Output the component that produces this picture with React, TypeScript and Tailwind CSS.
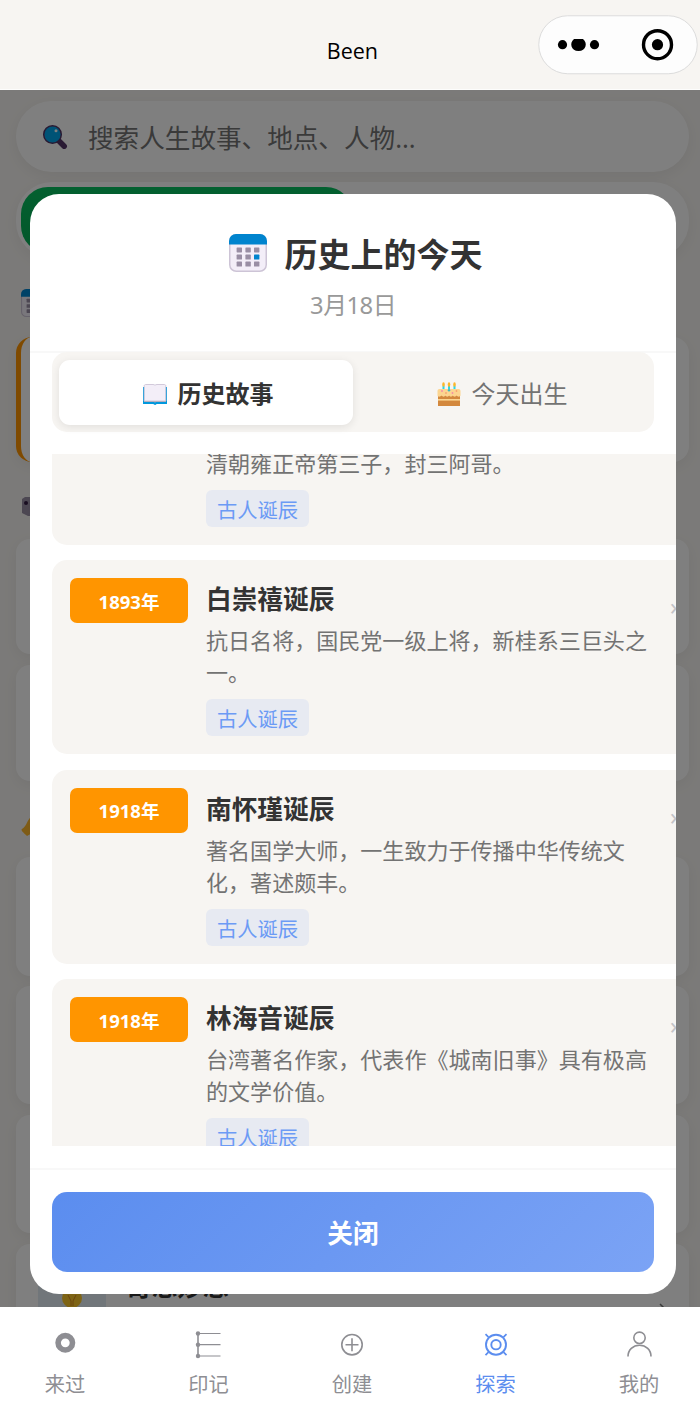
import { useState } from "react";
import type { ReactNode } from "react";
import clsx from "clsx";

interface Story {
  id: string;
  year: string;
  title: string;
  desc: string;
  tag: string;
}

const stories: Story[] = [
  {
    id: "yunzhi",
    year: "1677年",
    title: "胤祉诞辰",
    desc: "清朝雍正帝第三子，封三阿哥。",
    tag: "古人诞辰",
  },
  {
    id: "baichongxi",
    year: "1893年",
    title: "白崇禧诞辰",
    desc: "抗日名将，国民党一级上将，新桂系三巨头之一。",
    tag: "古人诞辰",
  },
  {
    id: "nanhuaijin",
    year: "1918年",
    title: "南怀瑾诞辰",
    desc: "著名国学大师，一生致力于传播中华传统文化，著述颇丰。",
    tag: "古人诞辰",
  },
  {
    id: "linhaiyin",
    year: "1918年",
    title: "林海音诞辰",
    desc: "台湾著名作家，代表作《城南旧事》具有极高的文学价值。",
    tag: "古人诞辰",
  },
];

function CalendarIcon({ className }: { className?: string }) {
  return (
    <svg viewBox="0 0 38 38" className={className}>
      <rect x="0.75" y="0.75" width="36.5" height="36.5" rx="6.5" fill="#f3eef8" stroke="#cdc4d6" strokeWidth="1.5" />
      <path d="M0 10.5V7a7 7 0 0 1 7-7h24a7 7 0 0 1 7 7v3.5z" fill="#0084ce" />
      {[13.4, 20.6, 27.6].map((y, row) =>
        [7.6, 16.4, 25].map((x, col) => (
          <rect
            key={`${row}-${col}`}
            x={x}
            y={y}
            width="5.4"
            height="5"
            rx="0.6"
            fill={row === 1 && col === 2 ? "#0084ce" : "#998ea4"}
          />
        ))
      )}
    </svg>
  );
}

function SearchIcon() {
  return (
    <svg viewBox="0 0 26 26" className="h-[26px] w-[26px]">
      <path d="M17.500 17.500l4.700 4.700" stroke="#533566" strokeWidth="5.500" strokeLinecap="round" />
      <circle cx="10.500" cy="10.500" r="8.800" fill="#00a6ed" stroke="#533566" strokeWidth="1.500" />
      <circle cx="14" cy="6.800" r="1.500" fill="#fff" />
    </svg>
  );
}

function BookIcon() {
  return (
    <svg viewBox="0 0 24 21" className="h-[21px] w-6">
      <path d="M0 3h24v17H13.4c-.2 1.2-2.6 1.2-2.8 0H0z" fill="#0098dd" />
      <path d="M1 17h22v1H13l-1 .8-1-.8H1z" fill="#a79fb0" />
      <path
        d="M1.200 2c0-1 .6-1.500 1.500-1.500H10c.9 0 1.600.3 2 .8.400-.5 1.100-.8 2-.8h7.300c.9 0 1.500.5 1.500 1.500v15H1.200z"
        fill="#f3eef8"
        stroke="#cdc4d6"
        strokeWidth="0.900"
      />
    </svg>
  );
}

function CakeIcon() {
  return (
    <svg viewBox="0 0 24 24" className="h-6 w-6">
      {[6.5, 12, 17.5].map((x) => (
        <g key={x}>
          <rect x={x - 1} y="3.500" width="2" height="5" fill="#26d9e8" />
          <ellipse cx={x} cy="2.500" rx="1.300" ry="2.300" fill="#fcb62b" />
        </g>
      ))}
      <path d="M1 13h22v11H1z" fill="#d3883e" />
      <path d="M1 17h22v1.600H1z" fill="#fcd590" />
      <path
        d="M.5 9c0-1.300.8-2 2-2h19c1.200 0 2 .7 2 2v4.500c-.5 1.500-3 1.500-4 0-.7 1.500-3 1.500-3.700 0-.7 1.500-3 1.500-3.700 0-.7 1.500-3 1.500-3.700 0-.7 1.500-3 1.500-3.700 0C3.500 15 .5 15 .5 13.500z"
        fill="#fcd590"
      />
      <circle cx="12" cy="8.300" r="1.200" fill="#3bb8c4" />
      <circle cx="5" cy="9" r="0.900" fill="#f58aa8" />
      <circle cx="9" cy="11" r="0.900" fill="#f9a36f" />
      <circle cx="15.500" cy="11" r="0.900" fill="#f58aa8" />
      <circle cx="19.500" cy="9" r="0.900" fill="#f9a36f" />
    </svg>
  );
}

function Capsule() {
  return (
    <svg viewBox="0 0 160 60" className="h-[60px] w-40">
      <rect x="0.750" y="0.750" width="158.500" height="58" rx="29" fill="#fdfdfd" stroke="#dcdcdc" />
      <circle cx="24.500" cy="29.700" r="4.600" />
      <path d="M36 24h9c5 4 3 12-4.500 12S31 28 36 24z" />
      <circle cx="56.500" cy="29.700" r="4.600" />
      <circle cx="119.500" cy="29.700" r="14" fill="none" stroke="#000" strokeWidth="3.400" />
      <circle cx="119.500" cy="29.700" r="5.600" />
    </svg>
  );
}

const navItems: { id: string; label: string; icon: ReactNode }[] = [
  {
    id: "been",
    label: "来过",
    icon: <circle cx="14.300" cy="12.800" r="7.200" strokeWidth="5.600" />,
  },
  {
    id: "marks",
    label: "印记",
    icon: (
      <>
        <path d="M2.500 3.500h23M2.500 14.700h23M2.500 26h23" strokeWidth="1.200" />
        <path d="M3 3v23" strokeWidth="1.600" />
        <g fill="currentColor" stroke="none">
          <circle cx="3" cy="3.500" r="2.200" />
          <circle cx="3" cy="14.700" r="2.200" />
          <circle cx="3" cy="26" r="2.200" />
        </g>
      </>
    ),
  },
  {
    id: "create",
    label: "创建",
    icon: (
      <>
        <circle cx="14" cy="14.700" r="10.200" strokeWidth="1.600" />
        <path d="M7.500 14.700h13M14 8.200v13" strokeWidth="1.600" />
      </>
    ),
  },
  {
    id: "explore",
    label: "探索",
    icon: (
      <>
        <circle cx="14" cy="14.700" r="10" strokeWidth="1.900" />
        <circle cx="14" cy="14.700" r="4.700" strokeWidth="1.900" />
        <path d="M3.500 4.200l3 3M24.500 4.200l-3 3M3.500 25.200l3-3M24.500 25.200l-3-3" strokeWidth="1.700" />
      </>
    ),
  },
  {
    id: "mine",
    label: "我的",
    icon: (
      <>
        <circle cx="14.500" cy="7.800" r="5.700" strokeWidth="1.600" />
        <path d="M3 26.500c0-6.500 5-11.300 11.500-11.300S26 20 26 26.500" strokeWidth="1.600" />
      </>
    ),
  },
];

function StoryCard({ story }: { story: Story }) {
  return (
    <div className="flex w-[646px] shrink-0 items-start rounded-[15px] bg-[#f7f5f2] px-[18px] pt-[18px] pb-[18px]">
      <div className="flex h-[45px] w-[118px] shrink-0 items-center justify-center rounded-[7px] bg-[#ff9500] pt-0.5 text-[18.500px] font-bold text-white">
        {story.year}
      </div>
      <div className="ml-[18px] w-[446px] shrink-0">
        <h3 className="h-[42px] text-[25.700px] leading-[44px] font-bold text-[#333]">{story.title}</h3>
        <p className="mt-[4px] text-[22.050px] leading-8 text-[#737373]">{story.desc}</p>
        <span className="mt-[11px] flex h-[37px] w-[103px] items-center justify-center rounded-[6px] bg-[#e7eaf2] pt-[3px] text-[20.300px] leading-[34px] text-[#6c9bf5]">
          {story.tag}
        </span>
      </div>
      <span className="mt-[12px] ml-[18px] text-[24px] leading-8 text-[#c4c4c8]">›</span>
    </div>
  );
}

/* Discover page that sits behind the dialog */
function Backdrop() {
  return (
    <div className="flex h-full flex-col bg-[#f7f5f2] pr-[11px] pl-4">
      <div className="mt-[11px] flex h-[71px] shrink-0 items-center rounded-full bg-white pl-[26px] shadow-[0_4px_15px_rgba(0,0,0,0.06)]">
        <SearchIcon />
        <span className="ml-5 pt-[5px] text-[25.600px] text-[#757575]">搜索人生故事、地点、人物...</span>
      </div>
      <div className="mt-[10px] flex h-[76px] shrink-0 rounded-[36px] bg-white p-[5px] shadow-[0_4px_15px_rgba(0,0,0,0.06)]">
        <div className="w-[332px] rounded-[27px] bg-gradient-to-b from-[#07c160] to-[#06ad56]" />
      </div>
      <div className="mt-[31px] h-7 shrink-0 pl-[5px]">
        <CalendarIcon className="h-7 w-7" />
      </div>
      <div className="mt-5 h-[125px] shrink-0 rounded-[16px] border-l-[5px] border-[#ff9500] bg-white shadow-[0_4px_15px_rgba(0,0,0,0.06)]" />
      <div className="mt-[35px] h-[19px] shrink-0 pl-[6px]">
        <svg viewBox="0 0 28 19" className="h-[19px] w-7">
          <path d="M0 2l3-2h22l3 3v16H6l-6-3z" fill="#998ea4" />
          <circle cx="4" cy="6" r="2" fill="#321b41" />
        </svg>
      </div>
      <div className="mt-[23px] h-[115px] shrink-0 rounded-[14px] bg-white shadow-[0_4px_15px_rgba(0,0,0,0.06)]" />
      <div className="mt-[11px] h-[116px] shrink-0 rounded-[14px] bg-white shadow-[0_4px_15px_rgba(0,0,0,0.06)]" />
      <div className="mt-[36px] h-5 shrink-0 pl-[5px]">
        <svg viewBox="0 0 20 20" className="h-5 w-5">
          <path d="M10 0C6 3 6 9 1 12c-2 1 3 5 5 7l14-8z" fill="#fcb62b" />
        </svg>
      </div>
      <div className="mt-[20px] h-[119px] shrink-0 rounded-[14px] bg-white shadow-[0_4px_15px_rgba(0,0,0,0.06)]" />
      <div className="mt-[10px] h-[118px] shrink-0 rounded-[14px] bg-white shadow-[0_4px_15px_rgba(0,0,0,0.06)]" />
      <div className="mt-[11px] h-[118px] shrink-0 rounded-[14px] bg-white shadow-[0_4px_15px_rgba(0,0,0,0.06)]" />
      <div className="mt-[11px] flex h-[118px] shrink-0 rounded-[14px] bg-white pt-[18px] pl-[22px] shadow-[0_4px_15px_rgba(0,0,0,0.06)]">
        <div className="flex h-[70px] w-[68px] items-center justify-center rounded-[14px] bg-[#e3edf5]">
          <svg viewBox="0 0 20 32" className="mt-1 h-8 w-5">
            <circle cx="10" cy="15" r="10" fill="#fcc92b" />
            <path d="M6 12l3 6v5M14 12l-3 6v5" stroke="#d98a1d" fill="none" />
            <path d="M6 24h8v7H6z" fill="#998ea4" />
          </svg>
        </div>
        <div className="ml-5 pt-[8px] text-[25.700px] leading-[34px] font-bold text-[#333]">奇思妙想</div>
        <svg viewBox="0 0 8 14" className="mt-[41px] mr-[22px] ml-auto h-[14px] w-2" fill="none" stroke="#777" strokeWidth="1.500">
          <path d="M1 1l6 6-6 6" />
        </svg>
      </div>
    </div>
  );
}

export default function App() {
  const [tab, setTab] = useState<"story" | "birth">("story");
  const [open, setOpen] = useState(true);
  const [page, setPage] = useState("explore");

  const tabs = [
    { id: "story" as const, label: "历史故事", icon: <BookIcon /> },
    { id: "birth" as const, label: "今天出生", icon: <CakeIcon /> },
  ];

  return (
    <div
      lang="zh-CN"
      className="flex h-[1428px] w-[700px] flex-col overflow-hidden bg-white font-['Noto_Sans','Noto_Sans_CJK_SC',sans-serif]"
    >
      <header className="flex h-[90px] shrink-0 items-start justify-end border-b border-[#fdfdfc] bg-[#f7f5f2] pt-[15px] pr-[2px]">
        <h1 className="mt-5 mr-[160px] font-['Open_Sans',sans-serif] text-[21.500px] leading-8 text-black">Been</h1>
        <Capsule />
      </header>

      <main className="relative min-h-0 flex-1 overflow-hidden">
        <Backdrop />
        {open && (
          <div className="absolute inset-0 bg-black/50 pt-[104px] pl-[30px]">
            <section className="flex h-[1100px] w-[646px] flex-col overflow-hidden rounded-[29px] bg-white">
              <div className="flex h-[159px] shrink-0 flex-col items-center border-b-2 border-[#f8f8f8] pt-9">
                <div className="flex items-center pl-[5px]">
                  <CalendarIcon className="-mt-[2px] h-[38px] w-[38px]" />
                  <h2 className="ml-[18px] pt-[2px] text-[33px] leading-[46px] font-bold text-[#333]">历史上的今天</h2>
                </div>
                <p className="mt-[9px] text-[23.800px] leading-9 tracking-[-0.500px] text-[#999]">3月18日</p>
              </div>

              <div className="mx-[22px] -mt-px flex h-20 shrink-0 rounded-[15px] bg-[#f7f5f2] px-[7px] pt-2 pb-[7px]">
                {tabs.map((t) => (
                  <button
                    key={t.id}
                    onClick={() => setTab(t.id)}
                    className={clsx(
                      "flex flex-1 items-center justify-center gap-[11px] rounded-[11px] pt-[3px] pl-[4px] text-[24px] leading-9",
                      tab === t.id
                        ? "bg-white font-bold text-[#333] shadow-[0_2px_8px_rgba(0,0,0,0.09)]"
                        : "text-[#737373]"
                    )}
                  >
                    {t.icon}
                    {t.label}
                  </button>
                ))}
              </div>

              {/* List is scrolled, so the first card is cut at the top */}
              <div className="mt-[22px] ml-[22px] flex h-[692px] shrink-0 flex-col justify-end overflow-hidden">
                <div className="-mb-[27px] flex flex-col gap-[15.500px]">
                  {stories.map((s) => (
                    <StoryCard key={s.id} story={s} />
                  ))}
                </div>
              </div>

              <div className="mt-[22px] border-t-2 border-[#f8f8f8] px-[22px] pt-[22px]">
                <button
                  onClick={() => setOpen(false)}
                  className="h-20 w-full rounded-[15px] bg-[linear-gradient(135deg,#5b8def,#7ba3f5)] pt-[5px] text-[25.700px] font-bold text-white"
                >
                  关闭
                </button>
              </div>
            </section>
          </div>
        )}
      </main>

      <nav className="flex h-[121px] shrink-0 justify-between bg-white pt-[23px] pr-[21px] pl-[25px]">
        {navItems.map((item) => (
          <button
            key={item.id}
            onClick={() => setPage(item.id)}
            className={clsx(
              "flex w-20 flex-col items-center",
              page === item.id ? "text-[#5b8def]" : "text-[#8e8e93]"
            )}
          >
            <svg viewBox="0 0 28 30" className="h-[30px] w-7" fill="none" stroke="currentColor">
              {item.icon}
            </svg>
            <span className="mt-[9px] text-[20.300px] leading-[30px]">{item.label}</span>
          </button>
        ))}
      </nav>
    </div>
  );
}
